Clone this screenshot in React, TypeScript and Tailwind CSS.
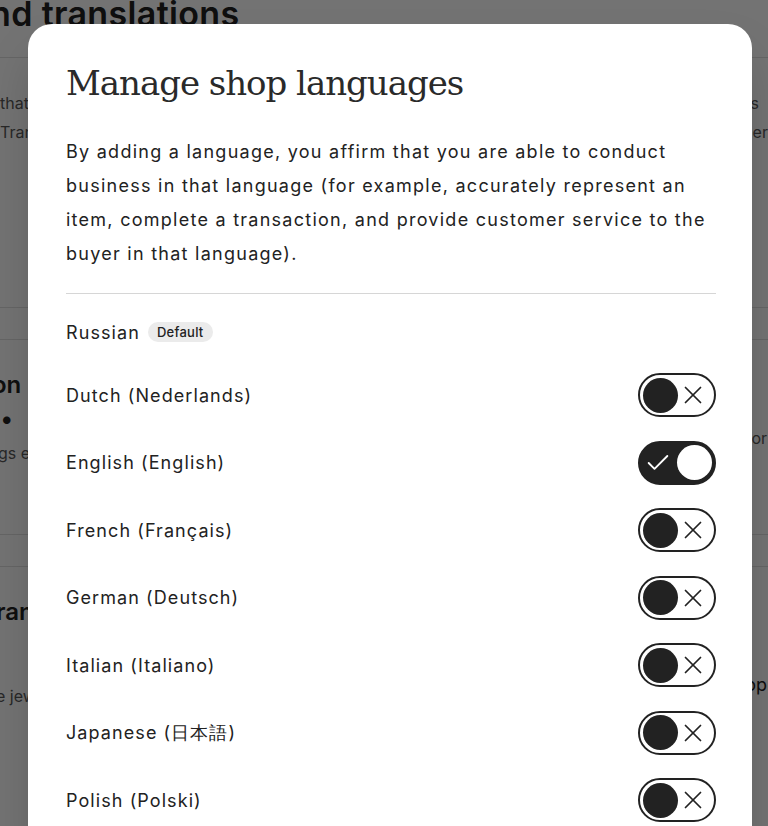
import { X, Check } from "lucide-react";

const languages = [
  { name: "Dutch (Nederlands)", on: false },
  { name: "English (English)", on: true },
  { name: "French (Français)", on: false },
  { name: "German (Deutsch)", on: false },
  { name: "Italian (Italiano)", on: false },
  { name: "Japanese (日本語)", on: false },
  { name: "Polish (Polski)", on: false },
];

function Toggle({ on }: { on: boolean }) {
  if (on) {
    return (
      <div className="flex h-11 w-[78px] items-center justify-between rounded-full border-2 border-[#222] bg-[#222] pl-[4px] pr-[2px]">
        <Check size={28} strokeWidth={1.6} className="text-white" />
        <span className="h-[35px] w-[35px] rounded-full bg-white" />
      </div>
    );
  }
  return (
    <div className="flex h-11 w-[78px] items-center rounded-full border-2 border-[#222] bg-white pl-[3px]">
      <span className="h-[35px] w-[35px] rounded-full bg-[#222]" />
      <X size={30} strokeWidth={1.4} className="text-[#222]" />
    </div>
  );
}

function BackgroundPage() {
  return (
    <div className="-ml-[223px] -mt-[10px] w-[1010px] font-['Inter',sans-serif] text-[#222]">
      <h1 className="text-[34px] font-semibold leading-[48px] tracking-[0.01em]">Languages and translations</h1>
      <div className="mt-[19px] border-t border-[#e1e1e1]" />
      <div className="ml-[223px] mt-[31px] flex justify-between text-[16px] leading-[29px] text-[#595959]">
        <div className="whitespace-nowrap">
          <p>that you offer to your buyers</p>
          <p>Translations are shown</p>
        </div>
        <div className="whitespace-nowrap pr-[10px]">
          <p>for all the sellers</p>
          <p>translations is here</p>
        </div>
      </div>
      <div className="mt-[160px] border-t border-[#e1e1e1]" />
      <div className="mt-[31px] border-t border-[#e1e1e1]" />
      <div className="ml-[223px] mt-[28px] flex justify-between">
        <div className="whitespace-nowrap">
          <p className="-ml-[8px] text-[24px] font-semibold leading-[34px]">on</p>
          <p className="text-[24px] leading-[34px]">•</p>
          <p className="-ml-[2px] text-[16px] leading-[34px] text-[#595959]">gs ever</p>
        </div>
        <div className="whitespace-nowrap pr-[20px] pt-[58px] text-[16px] text-[#595959]">options for</div>
      </div>
      <div className="mt-[64px] border-t border-[#e1e1e1]" />
      <div className="mt-[31px] border-t border-[#e1e1e1]" />
      <div className="ml-[223px] mt-[28px] flex justify-between">
        <div className="whitespace-nowrap">
          <p className="-ml-[4px] text-[24px] font-semibold leading-[34px]">ran</p>
          <p className="mt-[55px] -ml-[4px] text-[16px] text-[#595959]">e jewelry</p>
        </div>
        <div className="whitespace-nowrap pr-[20px] pt-[76px] text-[18px] text-[#222]">by shop</div>
      </div>
    </div>
  );
}

export default function App() {
  return (
    <div className="relative h-[826px] w-[768px] overflow-hidden bg-white">
      <BackgroundPage />
      <div className="absolute inset-0 bg-black/55" />
      <div className="absolute left-[28px] top-[24px] w-[724px] rounded-[24px] bg-white pb-10 pl-[38px] pr-[36px] pt-[36px] shadow-2xl">
        <h2 className="font-['DejaVu_Serif',serif] text-[34px] font-light leading-[46px] tracking-[-0.03em] text-[#2a2a2a]">
          Manage shop languages
        </h2>
        <p className="mt-[29px] font-['Inter',sans-serif] text-[18px] leading-[34px] tracking-[0.07em] text-[#222]">
          By adding a language, you affirm that you are able to conduct business in that language (for example,
          accurately represent an item, complete a transaction, and provide customer service to the buyer in that
          language).
        </p>
        <div className="mt-[22px] border-t border-[#d6d6d6]" />
        <div className="mt-[27px] flex h-[22px] items-center gap-2 font-['Inter',sans-serif]">
          <span className="text-[18px] tracking-[0.06em] text-[#222]">Russian</span>
          <span className="rounded-full bg-[#ebebeb] px-[9px] py-[2px] text-[13px] font-medium leading-4 tracking-[0.02em] text-[#222]">
            Default
          </span>
        </div>
        <div className="mt-[30px] flex flex-col gap-[23.5px] font-['Inter',sans-serif]">
          {languages.map((l) => (
            <div key={l.name} className="flex items-center justify-between">
              <span className="text-[18px] tracking-[0.06em] text-[#222]">{l.name}</span>
              <Toggle on={l.on} />
            </div>
          ))}
        </div>
      </div>
    </div>
  );
}
